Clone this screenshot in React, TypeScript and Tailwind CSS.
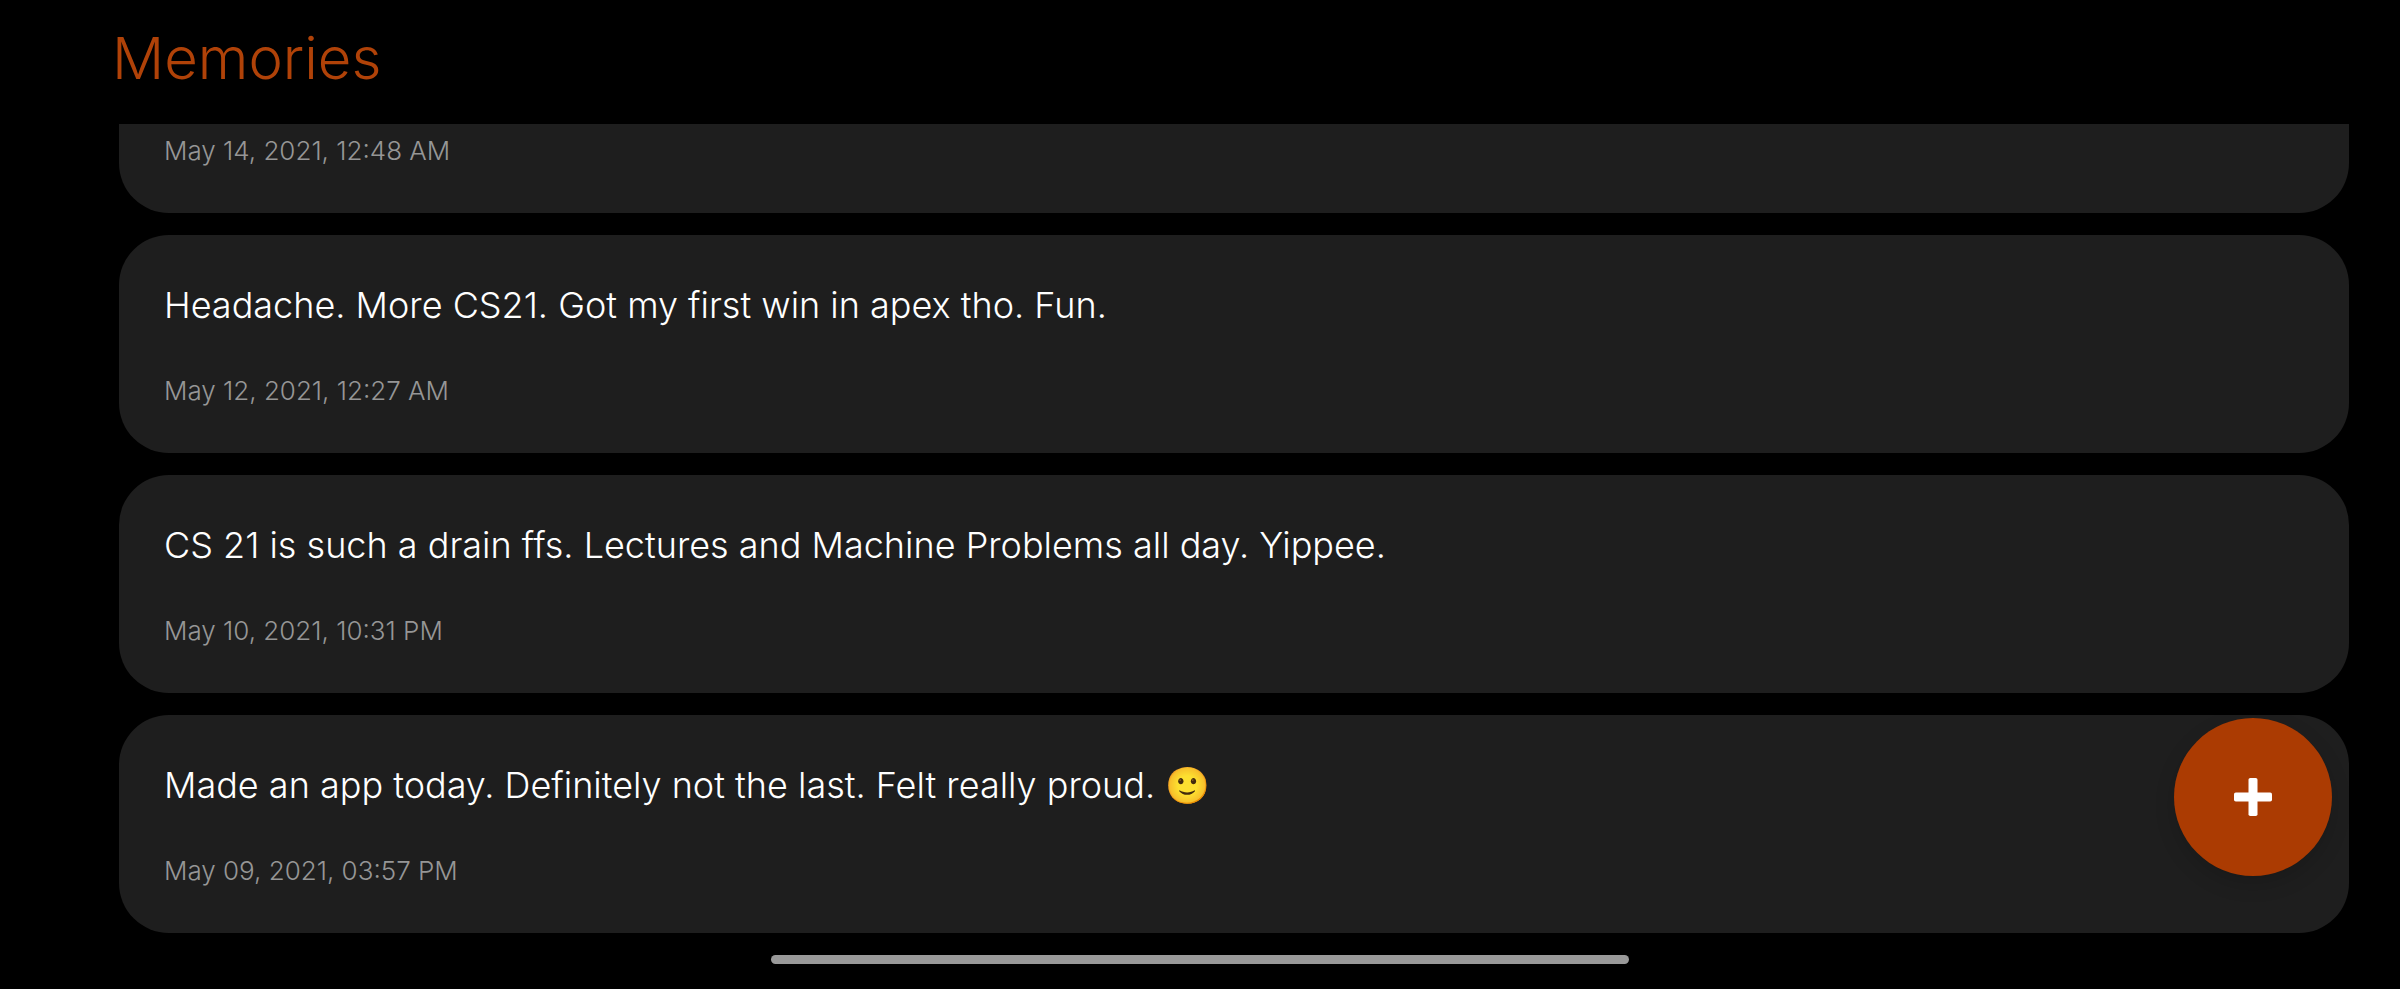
import React from "react";

type Memory = { text: string; date: string };

const memories: Memory[] = [
  { text: "Headache. More CS21. Got my first win in apex tho. Fun.", date: "May 12, 2021, 12:27 AM" },
  { text: "CS 21 is such a drain ffs. Lectures and Machine Problems all day. Yippee.", date: "May 10, 2021, 10:31 PM" },
  { text: "Made an app today. Definitely not the last. Felt really proud. 🙂", date: "May 09, 2021, 03:57 PM" },
];

function MemoryDate({ date }: { date: string }) {
  return <time className="block text-[26px] leading-8 font-light text-[#969696]">{date}</time>;
}

export default function App() {
  return (
    <div className="relative flex min-h-screen flex-col bg-black font-['Inter',sans-serif] text-white">
      <h1 className="px-28 pt-[22px] pb-[30px] text-[58px] leading-[72px] font-light text-[#b04208]">Memories</h1>
      <main className="flex flex-col gap-[22px] pr-[51px] pl-[119px]">
        <article className="rounded-b-[50px] bg-[#1e1e1e] px-[45px] pt-[11px] pb-[46px]">
          <MemoryDate date="May 14, 2021, 12:48 AM" />
        </article>
        {memories.map((m) => (
          <article key={m.date} className="rounded-[50px] bg-[#1e1e1e] px-[45px] py-[46px]">
            <p className="mb-[46px] text-[36px] leading-[48px] font-light">{m.text}</p>
            <MemoryDate date={m.date} />
          </article>
        ))}
      </main>
      <button
        type="button"
        aria-label="Add memory"
        className="absolute right-[68px] bottom-[113px] flex size-[158px] items-center justify-center rounded-full bg-[#ab3b02] shadow-[0_8px_20px_rgba(0,0,0,0.15)]"
      >
        <svg viewBox="0 0 38 38" className="size-[38px]" fill="white" aria-hidden="true">
          <rect x="14.5" y="0" width="9" height="38" rx="1.8" />
          <rect x="0" y="14.5" width="38" height="9" rx="1.8" />
        </svg>
      </button>
      <div className="absolute bottom-[25px] left-1/2 h-[9px] w-[858px] -translate-x-1/2 rounded-full bg-[#999]" />
    </div>
  );
}
